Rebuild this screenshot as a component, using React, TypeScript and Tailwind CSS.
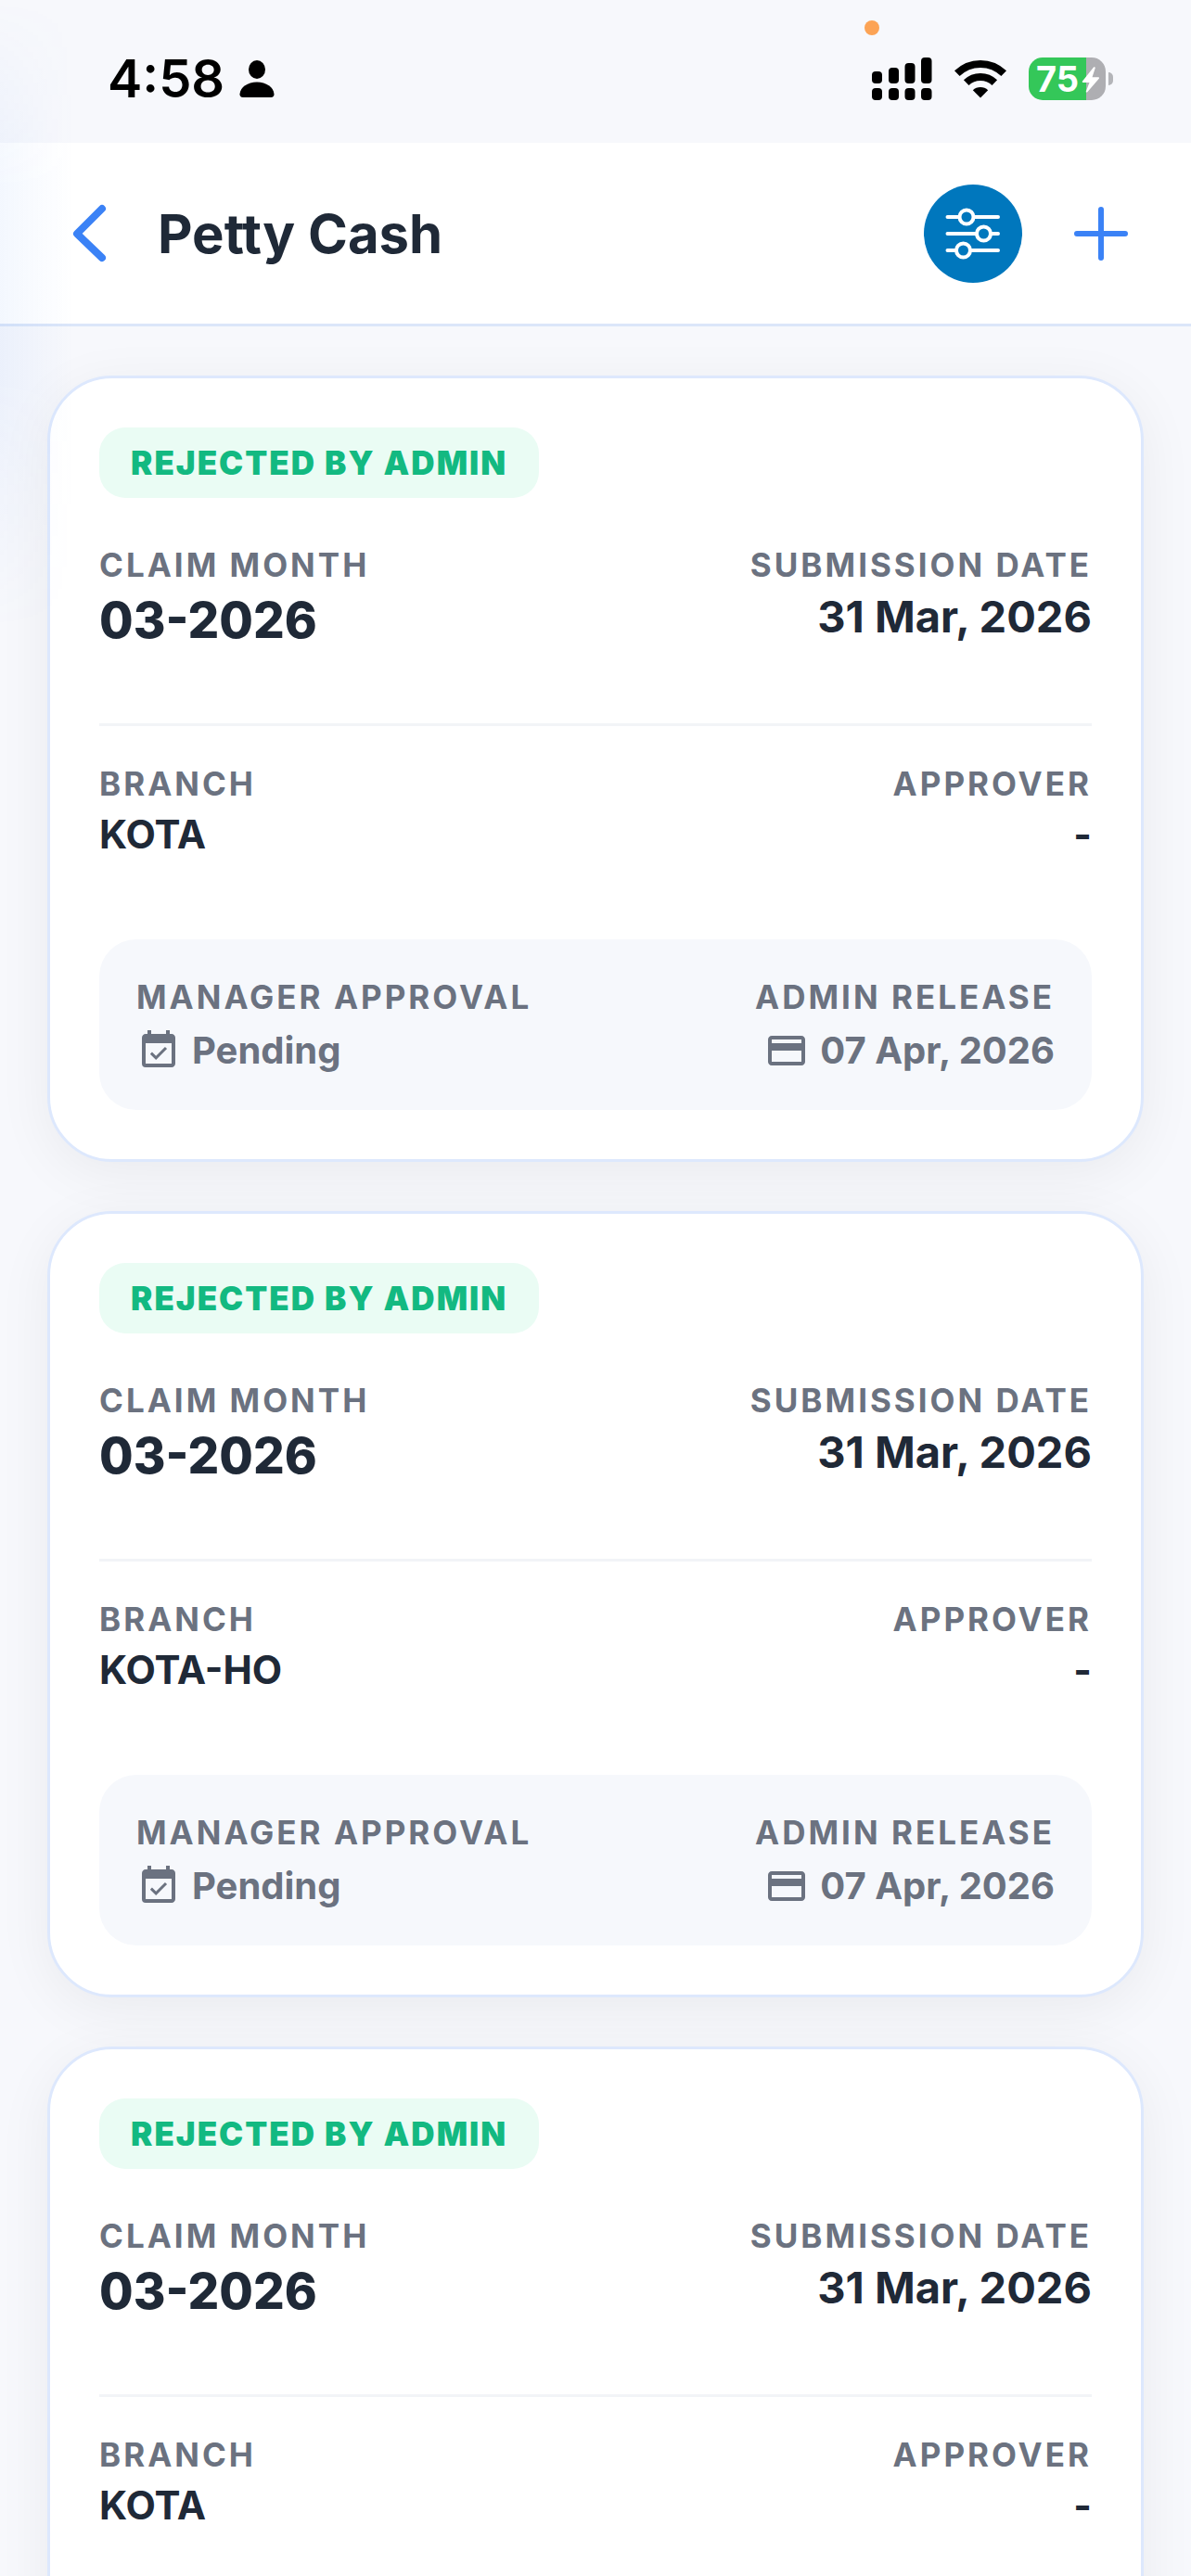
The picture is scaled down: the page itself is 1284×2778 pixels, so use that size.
import { ReactNode } from "react"
import { MdCreditCard, MdEventAvailable } from "react-icons/md"

type Claim = {
  id: number
  status: string
  month: string
  submitted: string
  branch: string
  approver: string
  manager: string
  release: string
}

const claims: Claim[] = [
  { id: 1, status: "REJECTED BY ADMIN", month: "03-2026", submitted: "31 Mar, 2026", branch: "KOTA", approver: "-", manager: "Pending", release: "07 Apr, 2026" },
  { id: 2, status: "REJECTED BY ADMIN", month: "03-2026", submitted: "31 Mar, 2026", branch: "KOTA-HO", approver: "-", manager: "Pending", release: "07 Apr, 2026" },
  { id: 3, status: "REJECTED BY ADMIN", month: "03-2026", submitted: "31 Mar, 2026", branch: "KOTA", approver: "-", manager: "Pending", release: "07 Apr, 2026" },
]

const StatusBar = () => {
  return (
    <div className="relative flex h-[154px] shrink-0 items-center justify-between pl-[116px] pr-[84px] pt-4 text-black">
      <div className="flex items-center gap-4">
        <span className="text-[56px] font-semibold leading-none">4:58</span>
        <svg width="38" height="40" viewBox="0 0 38 40" fill="currentColor" aria-hidden="true">
          <ellipse cx="19" cy="10" rx="9" ry="10" />
          <path d="M4 40C1.5 40 0.5 38.500 0.500 36.500C1 29 9 23.500 19 23.500S37 29 37.500 36.500C37.500 38.500 36.500 40 34 40Z" />
        </svg>
      </div>
      <span className="absolute left-[932px] top-[22px] size-4 rounded-full bg-[#fca355]" />
      <div className="flex items-center gap-6">
        <svg width="65" height="46" viewBox="0 0 65 46" fill="currentColor" aria-hidden="true">
          <rect x="0" y="15" width="11" height="13" rx="4" />
          <rect x="18" y="11" width="11" height="17" rx="4" />
          <rect x="35.500" y="6" width="11" height="22" rx="4" />
          <rect x="53" y="0" width="11.500" height="28" rx="4" />
          <rect x="0" y="33" width="11" height="13" rx="4" />
          <rect x="18" y="33" width="11" height="13" rx="4" />
          <rect x="35.500" y="33" width="11" height="13" rx="4" />
          <rect x="53" y="33" width="11.500" height="13" rx="4" />
        </svg>
        <svg width="56" height="42" viewBox="0 0 56 42" aria-hidden="true">
          <g fill="none" stroke="currentColor" strokeWidth="8">
            <path d="M2.800 15.200A36 36 0 0 1 53.200 15.200" />
            <path d="M12.700 25.200A22 22 0 0 1 43.300 25.200" />
          </g>
          <path d="M28 41.500L19.800 33.300A12 12 0 0 1 36.200 33.300Z" fill="currentColor" />
        </svg>
        <div className="flex items-center gap-[3px]">
          <div className="relative flex h-[46px] w-[83px] items-center overflow-hidden rounded-[15px] bg-linear-to-r from-[#34c759] from-75% to-[#aeaeb2] to-75% pl-2 text-white">
            <span className="text-[38px] font-bold leading-none">75</span>
            <svg className="absolute right-1.5 top-2.5" width="20" height="28" viewBox="0 0 20 28" fill="currentColor" aria-hidden="true">
              <path d="M13 0.500L1 15.500C0.500 16.200 0.800 17 1.700 17H8.500L4.800 26.500C4.500 27.600 5.500 28 6.300 27.200L18.800 12.800C19.400 12 19 11.200 18.100 11.200H11.500L14.700 1.500C15 0.300 13.800 -0.300 13 0.500Z" />
            </svg>
          </div>
          <span className="h-3.5 w-[5px] rounded-r-full bg-[#b4b5b9]" />
        </div>
      </div>
    </div>
  )
}

const Header = () => {
  return (
    <header className="flex h-[198px] shrink-0 items-center justify-between border-b-3 border-[#dbe6f9] bg-white pl-[75px] pr-[65px]">
      <div className="flex items-center gap-[51px]">
        <button type="button" aria-label="Back" className="text-[#3b82f6]">
          <svg width="44" height="64" viewBox="0 0 44 64" fill="none" stroke="currentColor" strokeWidth="8" strokeLinecap="round" strokeLinejoin="round">
            <path d="M35 5L8 32L35 58" />
          </svg>
        </button>
        <h1 className="text-[58px] font-bold leading-none text-[#1f2937]">Petty Cash</h1>
      </div>
      <div className="flex items-center gap-[53px]">
        <button type="button" aria-label="Filter" className="flex size-[106px] items-center justify-center rounded-full bg-[#0077bd] text-white">
          <svg width="60" height="60" viewBox="0 0 60 60" fill="none" stroke="currentColor" strokeWidth="4" strokeLinecap="round">
            <path d="M2.500 12H15M31 12H57M2.500 30H33M50 30H57M2.500 48H11M27 48H57" />
            <circle cx="23" cy="12" r="7.500" />
            <circle cx="41.500" cy="30" r="7.500" />
            <circle cx="19.500" cy="48" r="7.500" />
          </svg>
        </button>
        <button type="button" aria-label="Add claim" className="text-[#3b82f6]">
          <svg width="64" height="64" viewBox="0 0 64 64" fill="none" stroke="currentColor" strokeWidth="6" strokeLinecap="round">
            <path d="M32 6V58M6 32H58" />
          </svg>
        </button>
      </div>
    </header>
  )
}

const Label = ({ children }: { children: ReactNode }) => {
  return <p className="text-[35px] font-bold leading-[44px] tracking-[3px] text-[#6b7280]">{children}</p>
}

const ClaimCard = ({ claim }: { claim: Claim }) => {
  return (
    <article className="rounded-[70px] border-3 border-[#dde8fd] bg-white p-[53px] shadow-[0_12px_60px_rgba(0,0,0,0.06)]">
      <span className="inline-block rounded-[28px] bg-[#eafcf4] px-[34px] align-top text-[35px] font-black leading-[76px] tracking-[2px] text-[#13b981]">
        {claim.status}
      </span>

      <div className="mt-[50px] flex justify-between border-b-3 border-[#f2f4f7] pb-[81px]">
        <div className="flex flex-col gap-2">
          <Label>CLAIM MONTH</Label>
          <p className="text-[53px] font-extrabold leading-[60px] text-[#1f2937]">{claim.month}</p>
        </div>
        <div className="flex flex-col gap-2 text-right">
          <Label>SUBMISSION DATE</Label>
          <p className="text-[47px] font-bold leading-[52px] text-[#1f2937]">{claim.submitted}</p>
        </div>
      </div>

      <div className="mt-10 flex justify-between">
        <div className="flex flex-col gap-2">
          <Label>BRANCH</Label>
          <p className="text-[42px] font-bold leading-[50px] text-[#1f2937]">{claim.branch}</p>
        </div>
        <div className="flex flex-col gap-2 text-right">
          <Label>APPROVER</Label>
          <p className="text-[42px] font-bold leading-[50px] text-[#1f2937]">{claim.approver}</p>
        </div>
      </div>

      <div className="mt-[88px] flex justify-between rounded-[40px] bg-[#f6f8fc] px-10 py-10">
        <div className="flex flex-col gap-3">
          <Label>MANAGER APPROVAL</Label>
          <div className="flex items-center gap-3 text-[#6b7280]">
            <MdEventAvailable className="size-12" />
            <p className="text-[40px] font-bold leading-[48px]">{claim.manager}</p>
          </div>
        </div>
        <div className="flex flex-col items-end gap-3">
          <Label>ADMIN RELEASE</Label>
          <div className="flex items-center gap-3 text-[#6b7280]">
            <MdCreditCard className="size-12" />
            <p className="text-[40px] font-bold leading-[48px]">{claim.release}</p>
          </div>
        </div>
      </div>
    </article>
  )
}

export default function App() {
  return (
    <div className="relative flex h-screen flex-col overflow-hidden bg-[#f7f8fc] font-['Inter','Liberation_Sans',sans-serif]">
      <StatusBar />
      <Header />
      <main className="flex flex-1 flex-col gap-[53px] overflow-y-auto px-[51px] py-[53px] [scrollbar-width:none]">
        {claims.map((claim) => (
          <ClaimCard key={claim.id} claim={claim} />
        ))}
      </main>
      {/* soft blue glow along the left edge */}
      <div className="pointer-events-none absolute left-0 top-0 h-[680px] w-20 bg-linear-to-r from-[#3b82f6]/6 to-transparent mask-t-from-70% mask-b-from-60%" />
    </div>
  )
}
